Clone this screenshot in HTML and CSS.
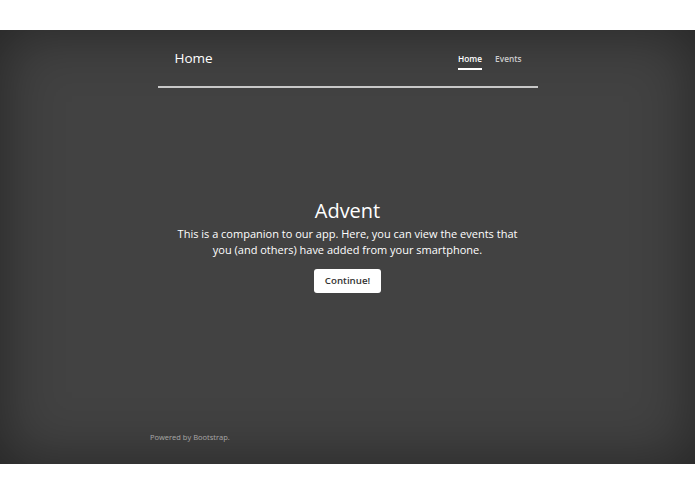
FILE: index.html
```html
<!DOCTYPE html>
<html>
<head>
<meta charset="utf-8">
<link rel="stylesheet" href="styles.css">
</head>
<body>
<div class="top-space"></div>
<div class="cover">
  <header class="masthead">
    <div class="masthead-row">
      <span class="brand">Home</span>
      <nav class="nav">
        <a class="nav-link active">Home</a>
        <a class="nav-link">Events</a>
      </nav>
    </div>
    <div class="rule"></div>
  </header>
  <main class="inner">
    <h1 class="title">Advent</h1>
    <p class="lead">This is a companion to our app. Here, you can view the events that you (and others) have added from your smartphone.</p>
    <a class="btn">Continue!</a>
  </main>
  <footer class="footer">Powered by Bootstrap.</footer>
</div>
<div class="bottom-space"></div>
</body>
</html>
```
FILE: styles.css
```css
html, body {
  margin: 0;
  padding: 0;
  background: #fff;
  font-family: "Open Sans", "DejaVu Sans", sans-serif;
}
.top-space { height: 30px; }
.bottom-space { height: 30px; }
.cover {
  height: 434px;
  background: #424242;
  box-shadow: inset 0 0 60px rgba(0,0,0,.45);
  display: flex;
  flex-direction: column;
  color: #fff;
}
.masthead {
  width: 380px;
  margin: 0 auto;
}
.masthead-row {
  display: flex;
  justify-content: space-between;
  align-items: center;
  padding: 17px 16px 0 17px;
  height: 22px;
}
.brand {
  font-size: 13.5px;
  line-height: 20px;
}
.nav {
  display: flex;
  gap: 13px;
}
.nav-link {
  font-size: 8.3px;
  font-weight: 600;
  color: rgba(255,255,255,.75);
  line-height: 12px;
  padding-bottom: 3px;
  border-bottom: 2px solid transparent;
  position: relative;
  top: 3px;
}
.nav-link.active {
  color: #fff;
  border-bottom-color: #fff;
}
.rule {
  margin-top: 17px;
  height: 2px;
  background: #c8c8c8;
}
.inner {
  flex: 1;
  display: flex;
  flex-direction: column;
  align-items: center;
  justify-content: center;
  text-align: center;
  padding-bottom: 28px;
}
.title {
  margin: 0 0 3px;
  font-size: 20px;
  font-weight: 400;
  line-height: 24px;
}
.lead {
  margin: 0 0 11px;
  width: 350px;
  font-size: 11px;
  line-height: 16px;
}
.btn {
  display: inline-block;
  background: #fff;
  color: #333;
  font-size: 9.7px;
  font-weight: 600;
  line-height: 24px;
  padding: 0 11px;
  border-radius: 3px;
}
.footer {
  padding: 0 0 22px 150px;
  font-size: 7.5px;
  color: rgba(255,255,255,.55);
}
```
